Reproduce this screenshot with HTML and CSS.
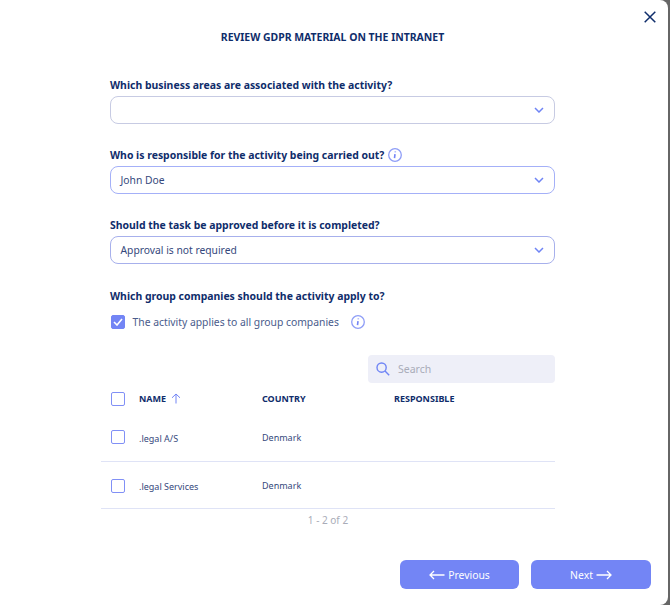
FILE: index.html
```html
<!DOCTYPE html>
<html lang="en">
<head>
<meta charset="utf-8">
<title>Review GDPR material on the intranet</title>
<link rel="stylesheet" href="styles.css">
</head>
<body>
<main class="modal">
  <button class="close" aria-label="Close">
    <svg width="12" height="12" viewBox="0 0 12 12"><path d="M.7.7l10.6 10.6M11.3.7L.7 11.3"/></svg>
  </button>
  <h1 class="title">REVIEW GDPR MATERIAL ON THE INTRANET</h1>

  <section class="field">
    <div class="label">Which business areas are associated with the activity?</div>
    <div class="select select-empty"><span></span><svg class="chev" width="10" height="6" viewBox="0 0 10 6"><path d="M1 1l4 4 4-4"/></svg></div>
  </section>

  <section class="field">
    <div class="label">Who is responsible for the activity being carried out?
      <svg class="info" width="14" height="14" viewBox="0 0 14 14"><circle cx="7" cy="7" r="6.3"/><path d="M7 6.2L6.5 10.2M7.3 3.6v.6"/></svg>
    </div>
    <div class="select select-focus"><span>John Doe</span><svg class="chev" width="10" height="6" viewBox="0 0 10 6"><path d="M1 1l4 4 4-4"/></svg></div>
  </section>

  <section class="field">
    <div class="label">Should the task be approved before it is completed?</div>
    <div class="select select-normal"><span>Approval is not required</span><svg class="chev" width="10" height="6" viewBox="0 0 10 6"><path d="M1 1l4 4 4-4"/></svg></div>
  </section>

  <section class="field companies">
    <div class="label">Which group companies should the activity apply to?</div>
    <div class="applies">
      <span class="check checked"><svg width="10" height="8" viewBox="0 0 10 8"><path d="M1 4l3 3 5-6"/></svg></span>
      <span class="applies-text">The activity applies to all group companies</span>
      <svg class="info" width="14" height="14" viewBox="0 0 14 14"><circle cx="7" cy="7" r="6.3"/><path d="M7 6.2L6.5 10.2M7.3 3.6v.6"/></svg>
    </div>
  </section>

  <div class="search-row">
    <div class="search">
      <svg width="14" height="14" viewBox="0 0 14 14"><circle cx="5.6" cy="5.6" r="4.6"/><path d="M9 9l4.2 4.2"/></svg>
      <span>Search</span>
    </div>
  </div>

  <div class="table">
    <div class="row head">
      <span class="cell-check"><span class="check"></span></span>
      <span class="cell-name">NAME <svg class="sort" width="10" height="11" viewBox="0 0 10 11"><path d="M5 10.5V1M1 4.8L5 1l4 3.800"/></svg></span>
      <span class="cell-country">COUNTRY</span>
      <span class="cell-resp">RESPONSIBLE</span>
    </div>
    <div class="row body-row first">
      <span class="cell-check"><span class="check"></span></span>
      <span class="cell-name low">.legal A/S</span>
      <span class="cell-country">Denmark</span>
      <span class="cell-resp"></span>
    </div>
    <div class="row body-row second">
      <span class="cell-check"><span class="check"></span></span>
      <span class="cell-name low">.legal Services</span>
      <span class="cell-country">Denmark</span>
      <span class="cell-resp"></span>
    </div>
  </div>
  <div class="pager">1 - 2 of 2</div>

  <footer class="actions">
    <button class="btn"><svg width="16" height="10" viewBox="0 0 16 10"><path d="M15.500 5H1M5 1L1 5l4 4"/></svg>Previous</button>
    <button class="btn">Next<svg width="16" height="10" viewBox="0 0 16 10"><path d="M.5 5H15M11 1l4 4-4 4"/></svg></button>
  </footer>
</main>
</body>
</html>
```
FILE: styles.css
```css
* { box-sizing: border-box; }
html, body { margin: 0; height: 605px; overflow: hidden; background: #666; }
body { font-family: "Noto Sans", "Open Sans", sans-serif; color: #0f2d6b; }
.modal {
  position: relative;
  width: 668px;
  height: 605px;
  background: #fff;
  border-radius: 0 8px 8px 0;
  padding: 30px 0 0 110px;
}
.close {
  position: absolute;
  top: 10px;
  right: 11px;
  width: 14px;
  height: 14px;
  padding: 1px;
  border: 0;
  background: none;
  display: flex;
}
.close path { stroke: #0f2d6b; stroke-width: 1.5; fill: none; }
.title {
  width: 445px;
  margin: 0 0 33px;
  font-size: 10.45px;
  line-height: 14px;
  font-weight: 700;
  text-align: center;
  color: #0f2d6b;
}
.field { width: 445px; margin-bottom: 23px; }
.label {
  display: flex;
  align-items: center;
  gap: 4px;
  height: 16px;
  margin-bottom: 3px;
  font-size: 10.45px;
  font-weight: 700;
  color: #0f2d6b;
  white-space: nowrap;
}
.select {
  display: flex;
  justify-content: space-between;
  align-items: center;
  height: 28px;
  padding: 0 10px 0 9.5px;
  border: 1px solid #c7cbe3;
  border-radius: 8px;
  font-size: 10.3px;
  color: #35487c;
}
.select-focus { border-color: #a4b0f8; border-width: 1.500px; }
.select-normal { border-color: #a7b0ec; }
.chev path { stroke: #6f84f5; stroke-width: 1.5; fill: none; }
.info circle { stroke: #8e9df7; stroke-width: 1.3; fill: #fff; }
.info path { stroke: #7385f5; stroke-width: 1.6; fill: none; }
.companies { padding-top: 1px; margin-bottom: 0; }
.applies {
  display: flex;
  align-items: center;
  height: 26px;
  margin-top: 5px;
  font-size: 10.35px;
  color: #4a5c8c;
}
.applies .check { margin-left: .5px; }
.applies-text { margin-left: 8px; margin-right: 12px; }
.check {
  display: inline-flex;
  align-items: center;
  justify-content: center;
  width: 14px;
  height: 14px;
  border: 1.8px solid #8190f6;
  border-radius: 2px;
  background: #fff;
}
.checked { background: #7385f5; border-color: #7385f5; }
.checked path { stroke: #fff; stroke-width: 1.6; fill: none; }
.search-row {
  display: flex;
  justify-content: flex-end;
  width: 445px;
  margin-top: 20px;
}
.search {
  display: flex;
  align-items: center;
  gap: 8px;
  width: 187px;
  height: 28px;
  padding: 0 8px;
  border-radius: 4px;
  background: #eeeff8;
  font-size: 10.5px;
  color: #a9acb8;
}
.search circle, .search path { stroke: #6f84f5; stroke-width: 1.4; fill: none; }
.table { width: 454px; margin-left: -9px; }
.row {
  display: grid;
  grid-template-columns: 29px 123px 132px 1fr;
  align-items: center;
  padding-left: 9px;
}
.row .check { margin-left: .5px; }
.cell-check { display: flex; }
.head { height: 29px; margin-top: 1px; font-size: 9px; font-weight: 700; color: #0f2d6b; }
.head .cell-name { display: flex; align-items: center; gap: 5px; }
.sort path { stroke: #7385f5; stroke-width: 1; fill: none; }
.body-row {
  height: 47px;
  border-bottom: 1px solid #dfe3f6;
  font-size: 9px;
  color: #35487c;
}
.body-row.first { height: 49px; }
.body-row.second { padding-top: 1px; }
.low { position: relative; top: 1px; }
.pager {
  width: 454px;
  margin-left: -9px;
  margin-top: 4px;
  text-align: center;
  font-size: 10px;
  line-height: 14px;
  color: #a9acb8;
}
.actions {
  position: absolute;
  right: 17px;
  bottom: 16px;
  display: flex;
  gap: 12px;
}
.btn {
  display: flex;
  align-items: center;
  justify-content: center;
  gap: 3px;
  width: 119px;
  height: 29px;
  border: 0;
  border-radius: 6px;
  background: #7385f5;
  font-family: inherit;
  font-size: 10.4px;
  color: #fff;
}
.btn + .btn { width: 120px; }
.btn path { stroke: #fff; stroke-width: 1.3; fill: none; }
```
